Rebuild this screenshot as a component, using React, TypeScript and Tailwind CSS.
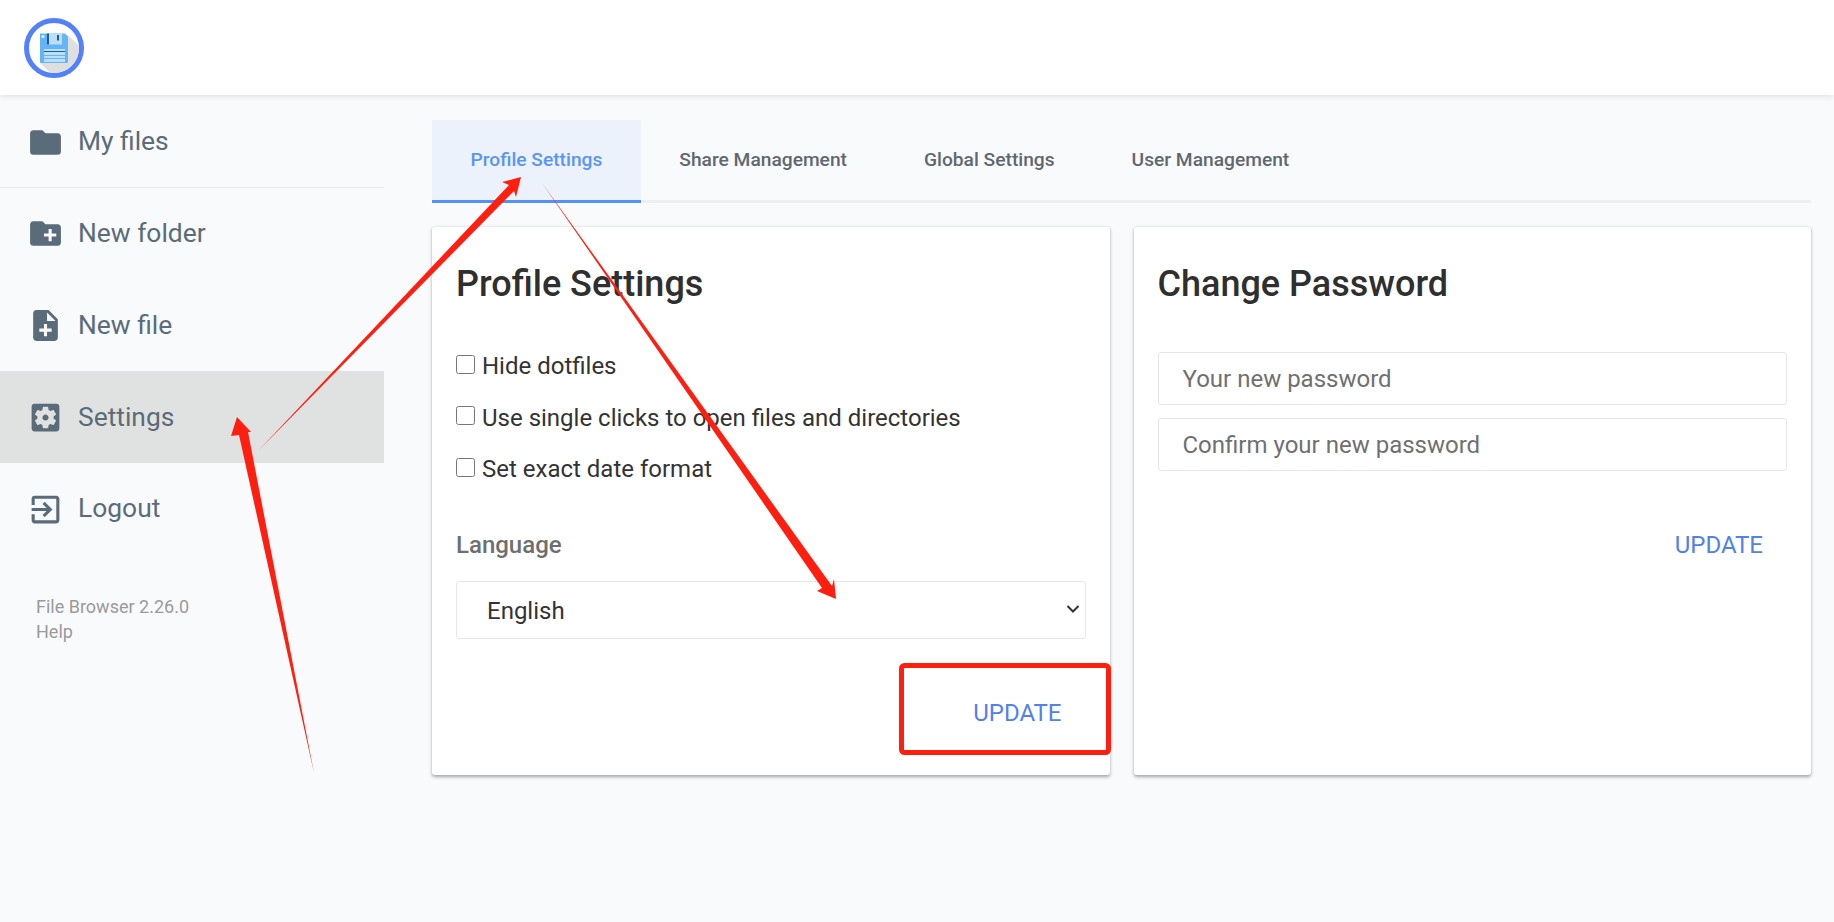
import { MdFolder, MdCreateNewFolder, MdNoteAdd, MdSettingsApplications, MdExitToApp } from "react-icons/md";

const Logo = () => (
  <svg width="60" height="60" viewBox="0 0 60 60" className="block">
    <defs>
      <clipPath id="c"><circle cx="30" cy="30" r="25" /></clipPath>
    </defs>
    <circle cx="30" cy="30" r="27.5" fill="#fff" stroke="#5281fa" strokeWidth="5" />
    <g clipPath="url(#c)">
      <polygon points="44,17 70,43 42,70 16,45" fill="#dfdfdf" />
    </g>
    <path d="M16 15.500h25l3 3v25.500a1 1 0 0 1-1 1H17a1 1 0 0 1-1-1z" fill="#64b5f6" />
    <rect x="23" y="15.500" width="15" height="11" fill="#bbdefb" />
    <rect x="23" y="15.500" width="2" height="11" fill="#1e5a94" />
    <rect x="33" y="17" width="2" height="5.500" fill="#1e5a94" />
    <rect x="20" y="31" width="21" height="13" fill="#bbdefb" />
    <rect x="20" y="33" width="21" height="1" fill="#1e5a94" />
    <rect x="20" y="37" width="21" height="1" fill="#64b5f6" />
    <rect x="20" y="40" width="21" height="1" fill="#64b5f6" />
    <circle cx="19" cy="18.500" r="1.500" fill="#e3f2fd" />
  </svg>
);

const nav = [
  { label: "My files", Icon: MdFolder, cls: "h-[93px] border-b border-[#e9ebee] pt-[2px]" },
  { label: "New folder", Icon: MdCreateNewFolder, cls: "h-[91px]" },
  { label: "New file", Icon: MdNoteAdd, cls: "h-[92px] pt-[1px]" },
  { label: "Settings", Icon: MdSettingsApplications, cls: "h-[92px] bg-[#e0e2e1] pt-[1px]" },
  { label: "Logout", Icon: MdExitToApp, cls: "h-[92px]" },
];

const tabs = ["Share Management", "Global Settings", "User Management"];

const cardCls =
  "flex h-[548px] flex-col rounded-[3px] bg-white px-[24px] shadow-[0_1.500px_4px_rgba(0,0,0,0.12),0_1.500px_3px_rgba(0,0,0,0.24)]";

export default function App() {
  return (
    <div className="relative min-h-screen overflow-hidden bg-[#f9fafc] font-['Roboto',sans-serif]">
      <header className="flex h-[95px] items-center bg-white pl-[24px] shadow-[0_1px_6px_rgba(0,0,0,0.12)]">
        <Logo />
      </header>
      <div className="flex">
        <aside className="w-[384px] shrink-0">
          {nav.map(({ label, Icon, cls }) => (
            <div key={label} className={`flex items-center gap-[14px] pl-[27px] text-[26.400px] text-[#5b6b78] ${cls}`}>
              <Icon size={37} className="shrink-0 text-[#5a6b7a]" />
              <span>{label}</span>
            </div>
          ))}
          <div className="mt-[40px] pl-[36px] text-[18px] leading-[24.500px] text-[#9a9a9a]">
            <p>File Browser 2.26.0</p>
            <p>Help</p>
          </div>
        </aside>
        <main className="flex-1 pl-[48px] pr-[23px] pt-[25px]">
          <nav className="flex h-[83px] border-b-[3px] border-[#eeeff1]">
            <div className="-mb-[3px] flex h-[83px] items-center border-b-[3px] border-[#5491f5] bg-[#ebf2fb] px-[38.500px] text-[19.200px] font-medium text-[#5a95f5]">
              Profile Settings
            </div>
            {tabs.map((t) => (
              <div key={t} className="flex items-center px-[38.500px] text-[19.200px] font-medium text-[#5f6870]">
                {t}
              </div>
            ))}
          </nav>
          <div className="mt-[24px] grid grid-cols-2 gap-[24px]">
            <section className={cardCls}>
              <h2 className="mt-[37px] text-[36px] font-medium leading-[41px] text-[#2f2f2f]">Profile Settings</h2>
              <div className="mt-[47px] flex flex-col gap-[23.500px] text-[24px] leading-[28px] text-[#333]">
                {["Hide dotfiles", "Use single clicks to open files and directories", "Set exact date format"].map((l) => (
                  <label key={l} className="flex items-center gap-[7px]">
                    <input type="checkbox" className="mb-[4px] h-[19px] w-[19px]" />
                    <span>{l}</span>
                  </label>
                ))}
              </div>
              <h3 className="mt-[48px] text-[24px] font-medium leading-[28px] text-[#6f6f6f]">Language</h3>
              <div className="relative mt-[22px] h-[58px]">
                <select className="h-[58px] w-full appearance-none rounded-[3px] border border-[#e6e6e6] bg-white pl-[30px] pr-[8px] pt-[2px] text-[24px] text-[#333]">
                  <option>English</option>
                </select>
                <svg className="pointer-events-none absolute right-[6px] top-[22px]" width="14" height="12" viewBox="0 0 14 12" fill="none">
                  <path d="M1.500 3l5.500 5.500L12.500 3" stroke="#333" strokeWidth="2" />
                </svg>
              </div>
              <div className="mt-[60px] flex justify-end pr-[24px] text-[24px] leading-[28px] text-[#5281ea]">UPDATE</div>
            </section>
            <section className={cardCls}>
              <h2 className="mt-[37px] text-[36px] font-medium leading-[41px] text-[#2f2f2f]">Change Password</h2>
              <input
                placeholder="Your new password"
                className="mt-[47px] h-[53px] w-full rounded-[3px] border border-[#e6e6e6] px-[24px] text-[24px] placeholder:text-[#707070]"
              />
              <input
                placeholder="Confirm your new password"
                className="mt-[13px] h-[53px] w-full rounded-[3px] border border-[#e6e6e6] px-[24px] text-[24px] placeholder:text-[#707070]"
              />
              <div className="mt-[60px] flex justify-end pr-[24px] text-[24px] leading-[28px] text-[#5281ea]">UPDATE</div>
            </section>
          </div>
        </main>
      </div>
      <svg className="pointer-events-none absolute inset-0" width="1834" height="922" viewBox="0 0 1834 922">
        <g fill="#ff1f10">
          <polygon points="314,773 239,435 231,436 237,417 251,432 248,432" />
          <polygon points="258,451 509,185 502,182 521,177 516,197 514,191" />
          <polygon points="542,183 832,586 834,579 836,599 817,591 822,588" />
        </g>
        <rect x="901.500" y="665.500" width="207" height="87" rx="3" fill="none" stroke="#ff1f10" strokeWidth="5" />
      </svg>
    </div>
  );
}
